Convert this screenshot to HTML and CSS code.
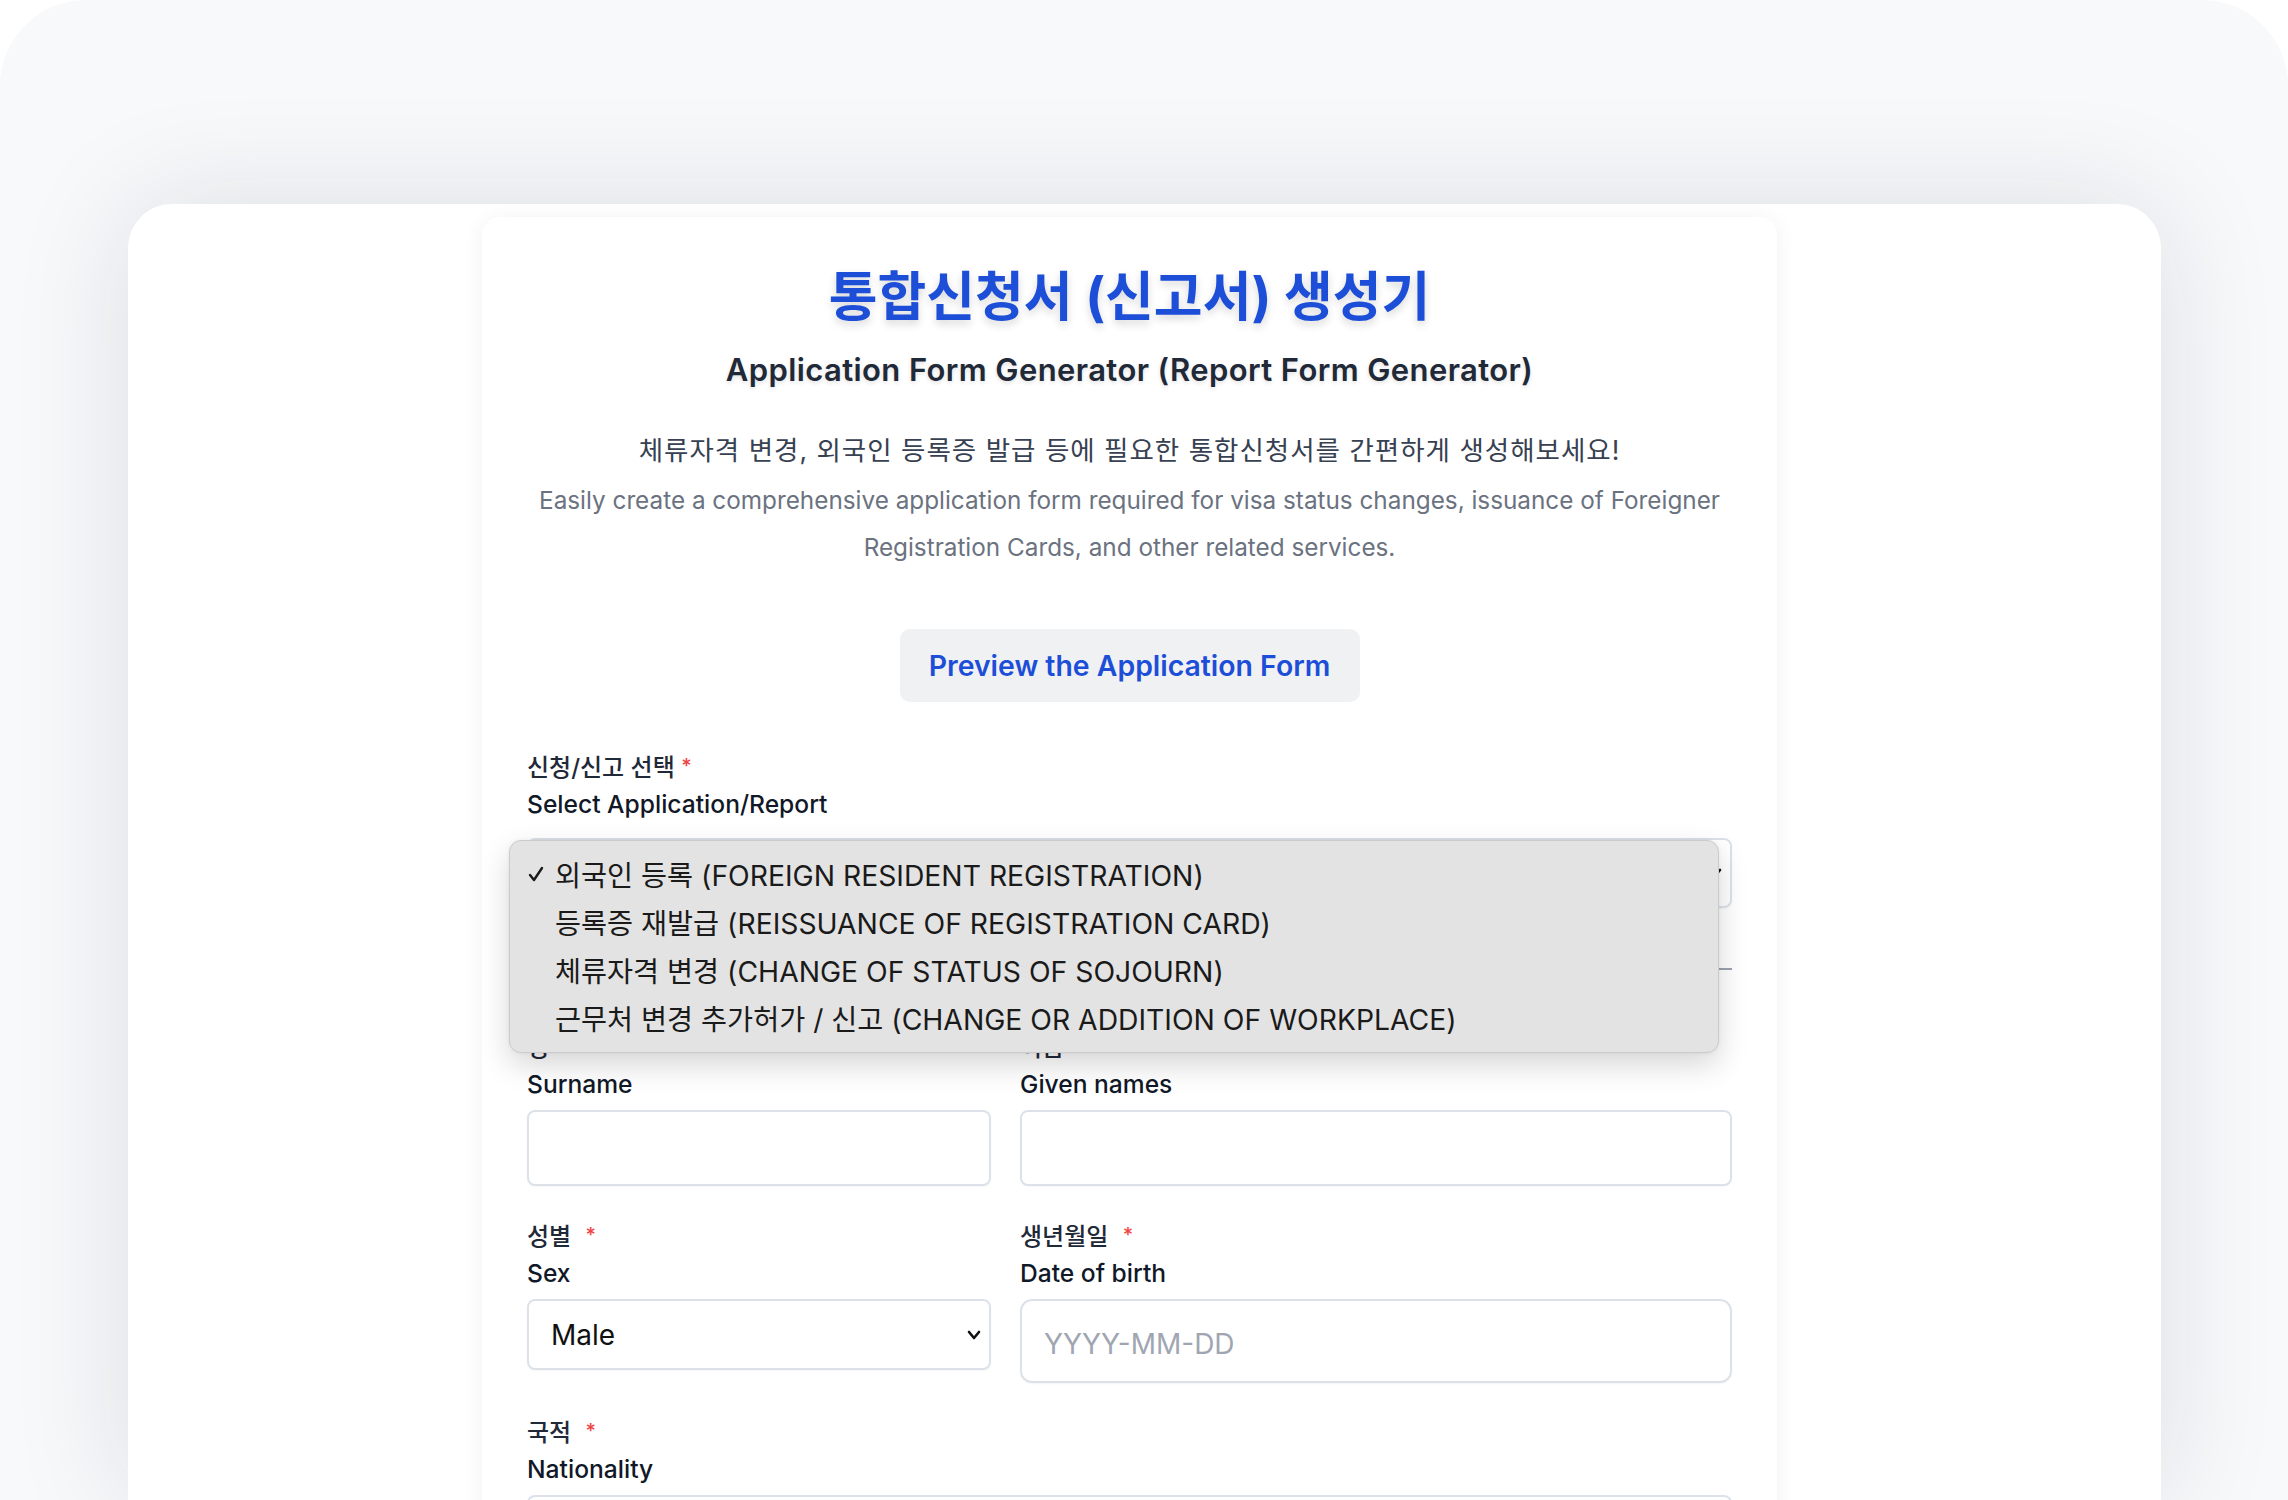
FILE: index.html
```html
<!DOCTYPE html>
<html lang="ko">
<head>
<meta charset="utf-8">
<title>통합신청서 (신고서) 생성기</title>
<link rel="stylesheet" href="styles.css">
</head>
<body>
<div class="frame">
  <div class="window">
    <main class="card">
      <h1 class="title">통합신청서 (신고서) 생성기</h1>
      <h2 class="subtitle">Application Form Generator (Report Form Generator)</h2>
      <p class="desc-ko">체류자격 변경, 외국인 등록증 발급 등에 필요한 통합신청서를 간편하게 생성해보세요!</p>
      <p class="desc-en">Easily create a comprehensive application form required for visa status changes, issuance of Foreigner<br>Registration Cards, and other related services.</p>
      <div class="btn-row"><button class="preview-btn" type="button">Preview the Application Form</button></div>

      <div class="field">
        <div class="label-ko">신청/신고 선택 <span class="req req-tight">*</span></div>
        <div class="label-en">Select Application/Report</div>
        <div class="control select-wrap first-control">
          <select class="select select-wide">
            <option>외국인 등록 (FOREIGN RESIDENT REGISTRATION)</option>
          </select>
          <svg class="chev" width="14" height="10" viewBox="0 0 14 10"><path d="M2 2 L7 8 L12 2" fill="none" stroke="#111" stroke-width="2.6" stroke-linecap="round" stroke-linejoin="round"/></svg>
        </div>
      </div>

      <hr class="divider">

      <div class="grid">
        <div class="field">
          <div class="label-ko">성 <span class="req">*</span></div>
          <div class="label-en">Surname</div>
          <input class="control input" type="text">
        </div>
        <div class="field">
          <div class="label-ko">이름 <span class="req">*</span></div>
          <div class="label-en">Given names</div>
          <input class="control input" type="text">
        </div>
        <div class="field">
          <div class="label-ko">성별 <span class="req">*</span></div>
          <div class="label-en">Sex</div>
          <div class="control select-wrap">
            <select class="select select-sex">
              <option>Male</option>
              <option>Female</option>
            </select>
            <svg class="chev" width="14" height="10" viewBox="0 0 14 10"><path d="M2 2 L7 8 L12 2" fill="none" stroke="#111" stroke-width="2.6" stroke-linecap="round" stroke-linejoin="round"/></svg>
          </div>
        </div>
        <div class="field">
          <div class="label-ko">생년월일 <span class="req">*</span></div>
          <div class="label-en">Date of birth</div>
          <input class="control input input-date" type="text" placeholder="YYYY-MM-DD">
        </div>
      </div>

      <div class="field nationality">
        <div class="label-ko">국적 <span class="req">*</span></div>
        <div class="label-en">Nationality</div>
        <input class="control input" type="text">
      </div>

      <div class="popup" role="listbox">
        <div class="popup-item selected">
          <svg class="check" width="18" height="18" viewBox="0 0 18 18"><path d="M3 10 L7 15 L15 3" fill="none" stroke="#1a1a1a" stroke-width="2.4" stroke-linecap="round" stroke-linejoin="round"/></svg>
          <span>외국인 등록 (FOREIGN RESIDENT REGISTRATION)</span>
        </div>
        <div class="popup-item"><span>등록증 재발급 (REISSUANCE OF REGISTRATION CARD)</span></div>
        <div class="popup-item"><span>체류자격 변경 (CHANGE OF STATUS OF SOJOURN)</span></div>
        <div class="popup-item"><span>근무처 변경 추가허가 / 신고 (CHANGE OR ADDITION OF WORKPLACE)</span></div>
      </div>
    </main>
  </div>
</div>
</body>
</html>
```

FILE: styles.css
```css
* { box-sizing: border-box; }

html, body {
  margin: 0;
  padding: 0;
  background: #ffffff;
  width: 2288px;
  height: 1500px;
  overflow: hidden;
  font-family: Inter, "Noto Sans CJK KR", sans-serif;
}

.frame {
  width: 2288px;
  height: 1500px;
  background: #f8f9fb;
  border-radius: 86px 86px 0 0;
  padding: 204px 127px 0 128px;
  overflow: hidden;
}

.window {
  height: 100%;
  background: #ffffff;
  border-radius: 44px 44px 0 0;
  box-shadow: 0 0 120px rgba(20, 24, 40, 0.12);
  padding: 13px 30px 0 0;
}

.card {
  position: relative;
  width: 1295px;
  margin: 0 auto;
  height: 1400px;
  background: #ffffff;
  border-radius: 18px;
  box-shadow: 0 2px 22px rgba(0, 0, 0, 0.06);
  padding: 48px 45px 0 45px;
}

.title {
  margin: 0;
  text-align: center;
  font-family: Inter, "Noto Sans CJK KR", sans-serif;
  font-size: 53px;
  line-height: 64px;
  font-weight: 700;
  color: #1d4ed8;
  text-shadow: 0 4px 8px rgba(0, 0, 0, 0.16);
}

.subtitle {
  margin: 23px 0 0;
  text-align: center;
  font-size: 31px;
  letter-spacing: 0.4px;
  line-height: 36px;
  font-weight: 600;
  color: #1f2937;
  text-shadow: 0 2px 4px rgba(0, 0, 0, 0.12);
}

.desc-ko {
  margin: 44px 0 0;
  text-align: center;
  font-size: 26.5px;
  letter-spacing: 1px;
  line-height: 36px;
  color: #374151;
}

.desc-en {
  margin: 9px 0 0;
  text-align: center;
  font-size: 24.3px;
  line-height: 47px;
  color: #6b7280;
}

.btn-row {
  display: flex;
  justify-content: center;
  margin-top: 58px;
}

.preview-btn {
  width: 460px;
  height: 73px;
  border: none;
  border-radius: 10px;
  background: #f0f1f3;
  color: #1d4ed8;
  font-family: Inter, "Noto Sans CJK KR", sans-serif;
  font-size: 28.4px;
  font-weight: 600;
}

.field {
  display: flex;
  flex-direction: column;
}

.btn-row + .field { margin-top: 46px; }

.label-ko {
  font-size: 24px;
  line-height: 36px;
  font-weight: 500;
  color: #1f2937;
}

.label-en {
  font-size: 24.6px;
  line-height: 36px;
  font-weight: 500;
  color: #111827;
}

.req {
  color: #ef4444;
  font-size: 20px;
  vertical-align: 3px;
  margin-left: 8px;
}

.req-tight { margin-left: 0; }

.control { margin-top: 8px; }
.first-control { margin-top: 16px; }

.select-wrap {
  position: relative;
}

.select {
  width: 100%;
  appearance: none;
  -webkit-appearance: none;
  background: #ffffff;
  border: 2px solid #dde2ea;
  border-radius: 8px;
  font-family: Inter, "Noto Sans CJK KR", sans-serif;
  font-size: 28px;
  color: #111111;
  padding: 0 22px;
  box-shadow: 0 1px 2px rgba(0, 0, 0, 0.04);
}

.select-wide { height: 70px; }
.select-sex { height: 71px; }

.chev {
  position: absolute;
  right: 10px;
  top: 50%;
  margin-top: -5px;
}

.divider {
  margin: 60px 0 0;
  border: none;
  border-top: 2px solid #9ca3af;
}

.grid {
  display: grid;
  grid-template-columns: 464px 1fr;
  column-gap: 29px;
  row-gap: 31px;
  align-items: start;
  margin-top: 58px;
}

.input {
  width: 100%;
  height: 76px;
  background: #ffffff;
  border: 2px solid #dde2ea;
  border-radius: 8px;
  box-shadow: 0 1px 2px rgba(0, 0, 0, 0.04);
  font-family: Inter, "Noto Sans CJK KR", sans-serif;
  font-size: 28px;
  padding: 0 22px;
  outline: none;
}

.input-date {
  height: 84px;
  border-radius: 12px;
  padding-top: 6px;
}

.input::placeholder { color: #a0a6b1; }

.nationality { margin-top: 30px; }

.popup {
  position: absolute;
  left: 27px;
  top: 623px;
  width: 1210px;
  height: 213px;
  background: #e3e3e3;
  border: 1px solid #cbcbcb;
  border-radius: 12px;
  box-shadow: 0 12px 30px rgba(0, 0, 0, 0.16), 0 0 4px rgba(0, 0, 0, 0.06);
  padding-top: 8px;
}

.popup-item {
  position: relative;
  height: 48px;
  display: flex;
  align-items: center;
  padding-left: 45px;
  font-size: 28.3px;
  color: #1a1a1a;
  white-space: nowrap;
}

.check {
  position: absolute;
  left: 17px;
  top: 16px;
}
```
